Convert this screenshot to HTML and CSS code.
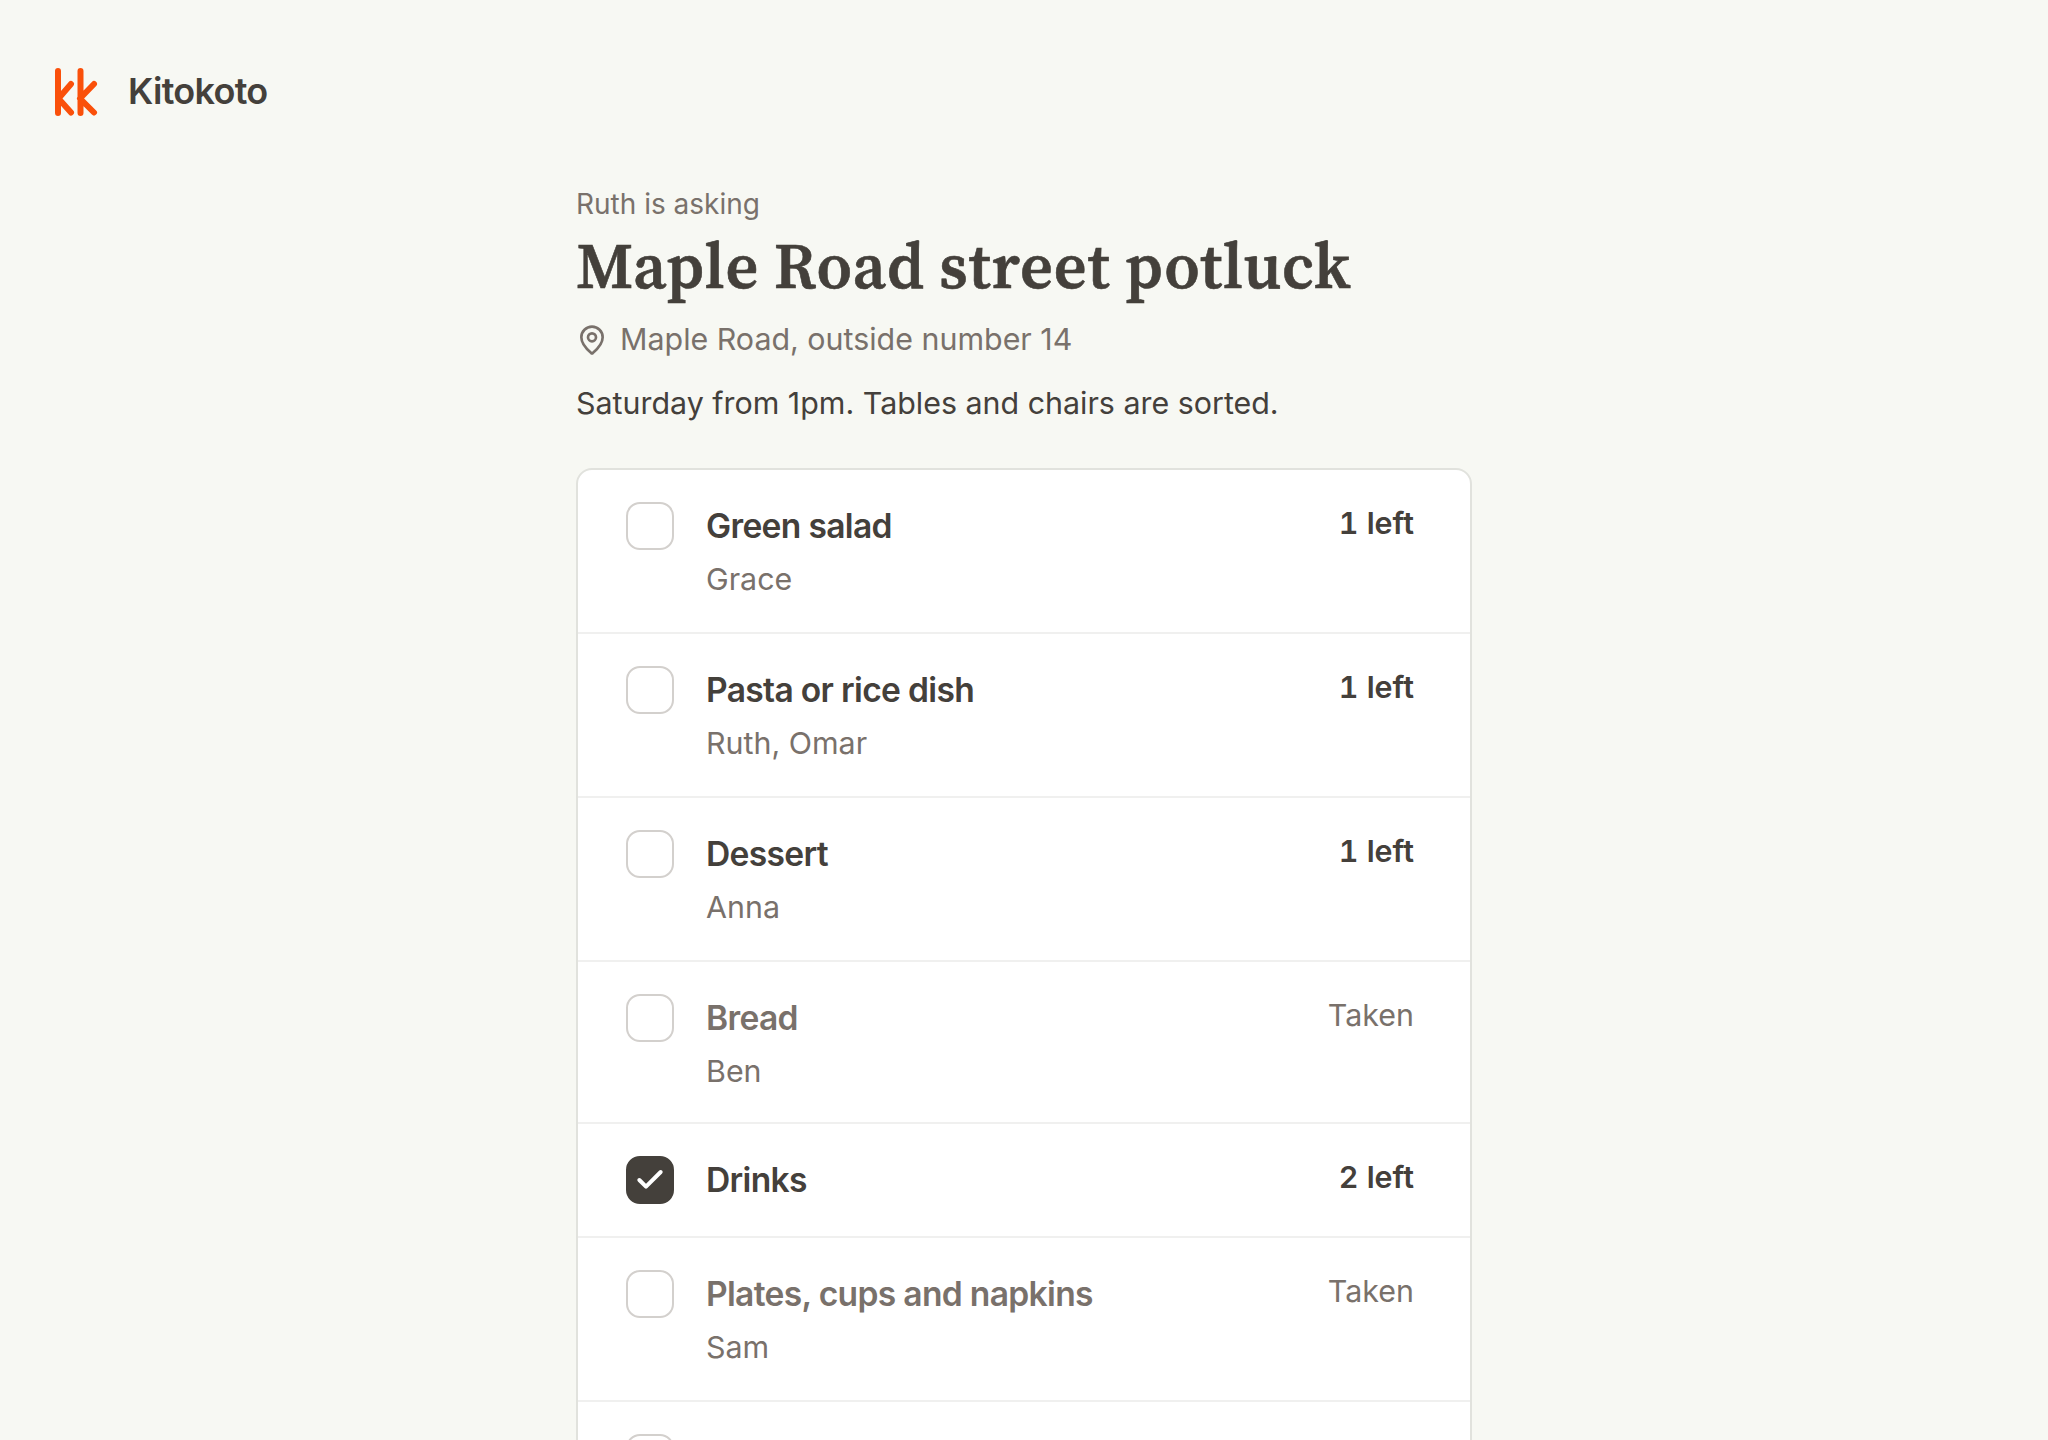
FILE: index.html
```html
<!DOCTYPE html>
<html lang="en">
<head>
    <meta charset="UTF-8">
    <meta name="viewport" content="width=device-width, initial-scale=1.0">
    <title>Maple Road street potluck - Kitokoto</title>
    <link rel="stylesheet" href="styles.css">
</head>
<body>
    <header class="site-header">
        <svg class="logo" viewBox="0 0 44 50" fill="none" stroke="currentColor" stroke-width="6" stroke-linecap="round" stroke-linejoin="round">
            <path d="M4 4V46M17 17L4.500 31.500L17 45.500" />
            <path d="M26.500 4V46M40 17L26 31.500L40 45.500" />
        </svg>
        <span class="brand">Kitokoto</span>
    </header>

    <main class="page">
        <p class="asking">Ruth is asking</p>
        <h1>Maple Road street potluck</h1>
        <p class="place">
            <svg class="pin" viewBox="0 0 24 24" fill="none" stroke="currentColor" stroke-width="2" stroke-linecap="round" stroke-linejoin="round">
                <path d="M20 10c0 5-5.500 10.200-7.400 11.800a1 1 0 0 1-1.200 0C9.500 20.200 4 15 4 10a8 8 0 0 1 16 0" />
                <circle cx="12" cy="10" r="3" />
            </svg>
            <span>Maple Road, outside number 14</span>
        </p>
        <p class="details">Saturday from 1pm. Tables and chairs are sorted.</p>

        <ul class="items">
            <li class="item">
                <span class="check"></span>
                <div class="info">
                    <div class="name">Green salad</div>
                    <div class="people">Grace</div>
                </div>
                <span class="left">1 left</span>
            </li>
            <li class="item">
                <span class="check"></span>
                <div class="info">
                    <div class="name">Pasta or rice dish</div>
                    <div class="people">Ruth, Omar</div>
                </div>
                <span class="left">1 left</span>
            </li>
            <li class="item">
                <span class="check"></span>
                <div class="info">
                    <div class="name">Dessert</div>
                    <div class="people">Anna</div>
                </div>
                <span class="left">1 left</span>
            </li>
            <li class="item taken short">
                <span class="check"></span>
                <div class="info">
                    <div class="name">Bread</div>
                    <div class="people">Ben</div>
                </div>
                <span class="left">Taken</span>
            </li>
            <li class="item">
                <span class="check checked">
                    <svg viewBox="0 0 24 24" fill="none" stroke="currentColor" stroke-width="3" stroke-linecap="round" stroke-linejoin="round">
                        <path d="M20 6L9 17l-5-5" />
                    </svg>
                </span>
                <div class="info">
                    <div class="name">Drinks</div>
                </div>
                <span class="left">2 left</span>
            </li>
            <li class="item taken">
                <span class="check"></span>
                <div class="info">
                    <div class="name">Plates, cups and napkins</div>
                    <div class="people">Sam</div>
                </div>
                <span class="left">Taken</span>
            </li>
            <li class="item">
                <span class="check"></span>
            </li>
        </ul>
    </main>
</body>
</html>
```
FILE: styles.css
```css
* {
    margin: 0;
    padding: 0;
    box-sizing: border-box;
}

body {
    height: 100vh;
    overflow: hidden;
    font-family: Inter, "Liberation Sans", sans-serif;
    font-size: 30.4px;
    color: #44403b;
    background: #f7f8f3;
}

.site-header {
    display: flex;
    align-items: center;
    gap: 30px;
    height: 184px;
    padding-left: 54px;
}

.logo {
    width: 44px;
    height: 50px;
    color: #fa500a;
}

.brand {
    padding-bottom: 2px;
    font-size: 36px;
    font-weight: 600;
    letter-spacing: -0.02em;
}

.page {
    width: 896px;
    margin: 0 auto;
}

.asking {
    font-size: 28px;
    line-height: 40px;
    color: #79716b;
}

h1 {
    font-family: "Source Serif 4", "Liberation Serif", serif;
    font-size: 64px;
    line-height: 84px;
    font-weight: 600;
    letter-spacing: 0.95px;
    word-spacing: -1px;
    -webkit-text-stroke: 0.6px currentColor;
    white-space: nowrap;
}

.place {
    display: flex;
    align-items: center;
    gap: 12px;
    margin-top: 7px;
    line-height: 48px;
    color: #79716b;
}

.pin {
    width: 32px;
    height: 32px;
    margin-top: 2px;
}

.details {
    margin-top: 16px;
    line-height: 48px;
}

.items {
    margin-top: 41px;
    list-style: none;
    background: #fff;
    border: 2px solid #e1e2dd;
    border-radius: 16px;
}

.item {
    display: flex;
    align-items: flex-start;
    gap: 32px;
    min-height: 114px;
    padding: 32px 56px 32px 48px;
    border-bottom: 2px solid #f0f0ef;
}

.check {
    display: flex;
    align-items: center;
    justify-content: center;
    flex: none;
    width: 48px;
    height: 48px;
    border: 2px solid #d3d0cd;
    border-radius: 14px;
}

.check.checked {
    color: #fff;
    background: #44403b;
    border-color: #44403b;
}

.check svg {
    flex: none;
    width: 32px;
    height: 32px;
}

.info {
    flex: 1;
}

.name {
    font-size: 33.6px;
    line-height: 48px;
    font-weight: 600;
    letter-spacing: -0.02em;
}

.people {
    padding-top: 8px;
    line-height: 42px;
    color: #79716b;
}

.short .people {
    height: 48px;
}

.left {
    line-height: 42px;
    font-weight: 600;
    font-variant-numeric: tabular-nums;
}

.taken .name,
.taken .left {
    color: #79716b;
}

.taken .left {
    font-weight: 400;
}
```
